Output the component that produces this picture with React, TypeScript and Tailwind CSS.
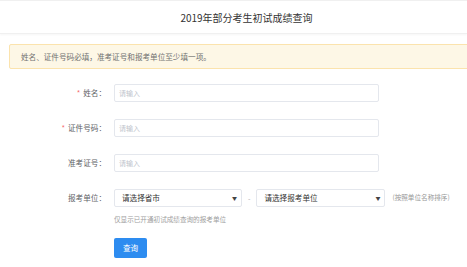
const font = { fontFamily: '"Noto Sans CJK SC", "Noto Sans", sans-serif' };

type Field = { label: string; required: boolean };

const fields: Field[] = [
  { label: "姓名：", required: true },
  { label: "证件号码：", required: true },
  { label: "准考证号：", required: false },
];

function Label({ text, required }: { text: string; required?: boolean }) {
  return (
    <div className="flex w-[106px] shrink-0 items-center justify-end text-[7.6px] text-[#606266]">
      {required && <span className="mr-[3px] text-[#f56c6c]">*</span>}
      {text}
    </div>
  );
}

function Select({ text, width }: { text: string; width: string }) {
  return (
    <div
      className={`flex h-[18px] items-center justify-between rounded-[2px] border border-[#e4e7ed] bg-white pl-[7px] pr-[4px] text-[7.6px] text-[#333] ${width}`}
    >
      <span>{text}</span>
      <span className="text-[5px] text-[#444]">▼</span>
    </div>
  );
}

export default function App() {
  return (
    <div className="h-[267px] w-[467px] overflow-hidden bg-white" style={font}>
      <header className="flex h-[34px] items-center justify-center border-y border-[#f0f0f0] pl-[26px] text-[10px] text-[#333] shadow-[0_1px_2px_rgba(0,0,0,0.04)]">
        2019年部分考生初试成绩查询
      </header>

      <div className="ml-[9px] mt-[10px] flex h-[25px] w-[480px] items-center rounded-[2px] border border-[#fbe3ad] bg-[#fdf7e6] pl-[11px] text-[7.6px] text-[#707070]">
        姓名、证件号码必填，准考证号和报考单位至少填一项。
      </div>

      <div className="mt-[15px] flex flex-col gap-[17px]">
        {fields.map((f) => (
          <div key={f.label} className="flex items-center">
            <Label text={f.label} required={f.required} />
            <div className="ml-[8px] flex h-[18px] w-[265px] items-center rounded-[2px] border border-[#e4e7ed] pl-[4px] text-[7px] text-[#c0c4cc]">
              请输入
            </div>
          </div>
        ))}

        <div className="flex items-center">
          <Label text="报考单位：" />
          <div className="ml-[8px] flex items-center">
            <Select text="请选择省市" width="w-[128px]" />
            <span className="mx-[6px] text-[7px] text-[#aaa]">-</span>
            <Select text="请选择报考单位" width="w-[129px]" />
            <span className="ml-[7px] text-[6.6px] text-[#999]">(按照单位名称排序)</span>
          </div>
        </div>
      </div>

      <div className="ml-[114px] mt-[8px] text-[6.6px] text-[#a0a0a0]">仅显示已开通初试成绩查询的报考单位</div>

      <button className="ml-[114px] mt-[13px] flex h-[20px] w-[33px] items-center justify-center rounded-[2px] bg-[#2d8cf0] text-[7.6px] text-white">
        查询
      </button>
    </div>
  );
}
